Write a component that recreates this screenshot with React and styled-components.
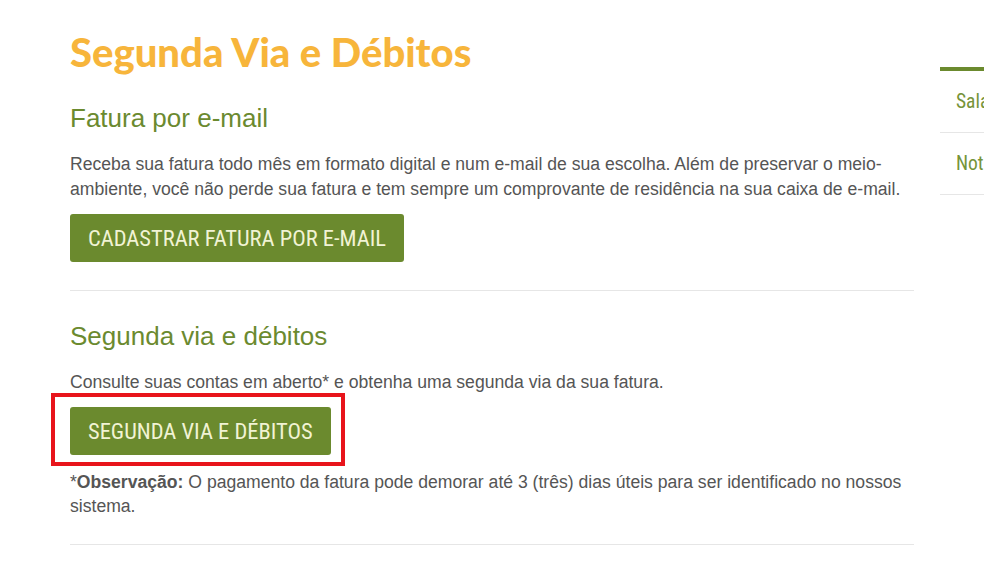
import styled, { createGlobalStyle } from 'styled-components';

const GlobalStyle = createGlobalStyle`
  html, body {
    margin: 0;
    padding: 0;
    background: #fff;
    overflow: hidden;
  }
  body {
    font-family: 'Liberation Sans', Arial, sans-serif;
  }
`;

const Page = styled.div`
  display: flex;
  align-items: flex-start;
  gap: 26px;
  padding: 0 0 0 70px;
  width: 1300px;
`;

const Main = styled.main`
  width: 844px;
  flex-shrink: 0;
`;

const PageTitle = styled.h1`
  margin: 28px 0 0;
  font-family: 'Lato', sans-serif;
  font-weight: 900;
  font-size: 40px;
  line-height: 48px;
  color: #f7b53b;
`;

const Section = styled.section`
  padding: ${({ first }) => (first ? '26px 0 28px' : '29px 0 25px')};
  border-bottom: 1px solid #e6e6e6;
`;

const SectionTitle = styled.h2`
  margin: 0 0 18px;
  font-family: 'Liberation Sans', Arial, sans-serif;
  font-weight: 400;
  font-size: 26px;
  line-height: 32px;
  color: #6b8a2f;
`;

const Text = styled.p`
  margin: 0 0 13px;
  font-size: 17.6px;
  line-height: 24.5px;
  color: #555;

  &:last-child {
    margin-bottom: 0;
  }

  strong {
    font-weight: 700;
  }
`;

const Highlight = styled.div`
  display: inline-block;
  margin: -15px 0 4px -19px;
  padding: 10px 10px 7px 15px;
  border: 4px solid #e8141b;
`;

const ActionButton = styled.button`
  display: inline-flex;
  align-items: center;
  height: 48px;
  padding: 0 18px;
  border: none;
  border-radius: 3px;
  background: #6b8a2e;
  color: #f1f3d4;
  font-family: 'Roboto Condensed', 'DejaVu Sans Condensed', 'DejaVu Sans', sans-serif;
  font-stretch: condensed;
  font-size: 22.5px;
  text-transform: uppercase;
  cursor: pointer;
`;

const Aside = styled.aside`
  width: 260px;
  margin-top: 67px;
  border-top: 4px solid #6b8a2e;
`;

const AsideItem = styled.div`
  height: 61px;
  display: flex;
  align-items: center;
  padding-left: 16px;
  border-bottom: 1px solid #e6e6e6;
  font-family: 'Roboto Condensed', 'DejaVu Sans Condensed', 'DejaVu Sans', sans-serif;
  font-stretch: condensed;
  font-size: 19.5px;
  color: #769439;
`;

export default function App() {
  return (
    <>
      <GlobalStyle />
      <Page>
        <Main>
          <PageTitle>Segunda Via e Débitos</PageTitle>

          <Section first>
            <SectionTitle>Fatura por e-mail</SectionTitle>
            <Text>
              Receba sua fatura todo mês em formato digital e num e-mail de sua escolha. Além de preservar o meio-
              <br />
              ambiente, você não perde sua fatura e tem sempre um comprovante de residência na sua caixa de e-mail.
            </Text>
            <ActionButton>Cadastrar fatura por e-mail</ActionButton>
          </Section>

          <Section>
            <SectionTitle>Segunda via e débitos</SectionTitle>
            <Text>Consulte suas contas em aberto* e obtenha uma segunda via da sua fatura.</Text>
            <Highlight>
              <ActionButton>Segunda via e débitos</ActionButton>
            </Highlight>
            <Text>
              *<strong>Observação:</strong> O pagamento da fatura pode demorar até 3 (três) dias úteis para ser
              identificado no nossos
              <br />
              sistema.
            </Text>
          </Section>
        </Main>

        <Aside>
          <AsideItem>Salas de Atendimento</AsideItem>
          <AsideItem>Notícias</AsideItem>
        </Aside>
      </Page>
    </>
  );
}
